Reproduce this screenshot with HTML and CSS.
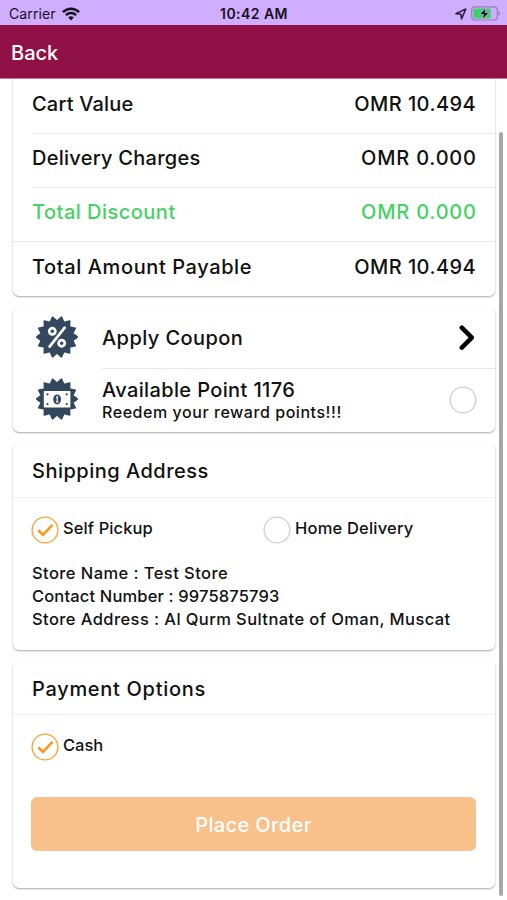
FILE: index.html
```html
<!DOCTYPE html>
<html lang="en">
<head>
<meta charset="utf-8">
<title>Checkout</title>
<link rel="stylesheet" href="styles.css">
</head>
<body>
<svg width="0" height="0" class="defs">
  <defs>
    <path id="burst" d="M0-16 4.5-19.8 6.9-14.4 12.7-15.9 12.5-10 18.3-8.8 15.6-3.6 20.3 0 15.6 3.6 18.3 8.8 12.5 10 12.7 15.9 6.9 14.4 4.5 19.8 0 16-4.5 19.8-6.9 14.4-12.7 15.9-12.5 10-18.3 8.8-15.6 3.6-20.3 0-15.6-3.6-18.3-8.8-12.5-10-12.7-15.9-6.9-14.4-4.5-19.8Z" fill="#33475f" stroke="#33475f" stroke-width="1.6" stroke-linejoin="round"/>
    <g id="check"><circle cx="14" cy="14" r="12.9" fill="#fff" stroke="#f9a53a" stroke-width="1.4"/><path d="M7.2 14.2 11.9 18.8 21.5 8.9" fill="none" stroke="#f99a1c" stroke-width="2.6"/></g>
  </defs>
</svg>
<header class="status">
  <div class="carrier"><span class="t-carrier">Carrier</span>
    <svg width="18" height="14" viewBox="0 0 18 14" fill="none" stroke="#17121c" stroke-width="2.5"><path d="M.9 5.2C5.5.6 12.5.6 17.1 5.2M3.9 8.2c2.9-2.8 7.3-2.8 10.2 0"/><path d="M6.2 10.4c1.7-1.4 3.9-1.4 5.6 0L9 13.4Z" fill="#17121c" stroke="none"/></svg>
  </div>
  <span class="time">10:42 AM</span>
  <div class="battery">
    <svg width="12" height="12" viewBox="0 0 12 12"><path d="M1 5.6 10.8 1 6.6 10.8 5.9 6.2Z" fill="none" stroke="#2b2238" stroke-width="1.6" stroke-linejoin="round"/></svg>
    <svg width="30" height="15" viewBox="0 0 30 15"><rect x=".7" y=".8" width="25.6" height="13.2" rx="3.4" fill="none" stroke="#9482b3" stroke-width="1.2"/><rect x="2.4" y="2.4" width="17.4" height="10" rx="1.8" fill="#3fd06a"/><path d="M27.4 5.2c2 .6 2 3.8 0 4.4Z" fill="#9482b3"/><path d="M14.8 1.8 8.8 8.3h3.7l-1.1 5L18 6.6h-4Z" fill="#111" stroke="#cfadff" stroke-width=".7"/></svg>
  </div>
</header>
<nav class="nav"><span class="t-back">Back</span></nav>
<main class="content">
  <section class="card summary">
    <div class="line"><span class="t-cart">Cart Value</span><span class="t-amt">OMR 10.494</span></div>
    <div class="line"><span class="t-delivery">Delivery Charges</span><span class="t-zero">OMR 0.000</span></div>
    <div class="line discount"><span class="t-discount">Total Discount</span><span class="t-zero">OMR 0.000</span></div>
    <div class="line total"><span class="t-total">Total Amount Payable</span><span class="t-amt">OMR 10.494</span></div>
  </section>
  <section class="card offers">
    <div class="offer">
      <svg class="badge" width="44" height="44" viewBox="-22 -22 44 44"><use href="#burst"/><g fill="none" stroke="#fff" stroke-width="2.7" stroke-linecap="round"><circle cx="-4.7" cy="-5.7" r="3.1"/><circle cx="4.7" cy="6.2" r="3.1"/><path d="M7.7-9.3-7.4 9.7"/></g></svg>
      <div class="offer-body coupon"><span class="t-coupon">Apply Coupon</span>
        <svg width="18" height="26" viewBox="0 0 18 26"><path d="M3.8 2.7 13.8 12.7 3.8 22.7" fill="none" stroke="#000" stroke-width="4.5" stroke-linecap="round" stroke-linejoin="round"/></svg>
      </div>
    </div>
    <div class="offer">
      <svg class="badge" width="44" height="44" viewBox="-22 -22 44 44"><use href="#burst"/><rect x="-13.2" y="-8" width="26.6" height="16.6" rx=".8" fill="#fff"/><g fill="#33475f"><ellipse cx=".1" cy=".4" rx="3.9" ry="5"/><circle cx="-9.5" cy="-4.7" r="1.1"/><circle cx="9.7" cy="-4.7" r="1.1"/><circle cx="-9.5" cy="5.1" r="1.1"/><circle cx="9.7" cy="5.1" r="1.1"/></g><path d="M-.9-1.4.2-2.3V2.8M-1.1 2.9H1.4" fill="none" stroke="#fff" stroke-width="1.1"/></svg>
      <div class="offer-body points">
        <div class="stack"><span class="t-points">Available Point 1176</span><span class="small t-redeem">Reedem your reward points!!!</span></div>
        <svg width="28" height="28" viewBox="0 0 28 28"><circle cx="14" cy="14" r="12.9" fill="#fff" stroke="#d2d2d2" stroke-width="1.4"/></svg>
      </div>
    </div>
  </section>
  <section class="card shipping">
    <h2><span class="t-shipping">Shipping Address</span></h2>
    <div class="options">
      <div class="option"><svg width="28" height="28"><use href="#check"/></svg><span class="t-self">Self Pickup</span></div>
      <div class="option"><svg width="28" height="28"><circle cx="14" cy="14" r="12.9" fill="#fff" stroke="#d2d2d2" stroke-width="1.4"/></svg><span class="t-home">Home Delivery</span></div>
    </div>
    <address>
      <div><span class="t-store">Store Name : Test Store</span></div>
      <div><span class="t-contact">Contact Number : 9975875793</span></div>
      <div><span class="t-address">Store Address : Al Qurm Sultnate of Oman, Muscat</span></div>
    </address>
  </section>
  <section class="card payment">
    <h2><span class="t-payment">Payment Options</span></h2>
    <div class="options">
      <div class="option"><svg width="28" height="28"><use href="#check"/></svg><span class="t-cash">Cash</span></div>
    </div>
    <button class="order"><span class="t-order">Place Order</span></button>
  </section>
  <div class="scrollbar"></div>
</main>
</body>
</html>
```
FILE: styles.css
```css
* { box-sizing: border-box; }
body {
  margin: 0;
  width: 507px;
  height: 900px;
  overflow: hidden;
  background: #fff;
  color: #111;
  font: 500 20px/24px Inter, "Noto Sans", sans-serif;
}
svg { display: block; flex: none; }
.defs { position: absolute; }
span { white-space: nowrap; }

.status {
  display: grid;
  grid-template-columns: 1fr auto 1fr;
  align-items: center;
  height: 25px;
  padding: 2px 6px 0 9px;
  background: #cfadff;
  color: #17121c;
  font-size: 14px;
  line-height: 20px;
}
.carrier { display: flex; align-items: center; gap: 6px; font-weight: 400; }
.time { font-weight: 600; letter-spacing: .45px; margin-left: -2px; }
.battery { display: flex; align-items: center; justify-content: flex-end; gap: 4px; }
.nav {
  display: flex;
  align-items: center;
  height: 54px;
  padding: 2px 11px 0;
  background: #8f1145;
  border-bottom: 1px solid #c67997;
  color: #fff;
}
.content { position: relative; height: 821px; padding: 0 12px 0 13px; }
.card {
  background: #fff;
  border-radius: 6px;
  box-shadow: 0 1px 2px rgba(0, 0, 0, .34);
}

.summary { height: 217px; padding-top: 1px; border-radius: 0 0 6px 6px; clip-path: inset(0 -5px -5px -5px); }
.line {
  display: flex;
  align-items: center;
  justify-content: space-between;
  height: 54px;
  margin-left: 19px;
  padding: 0 19px 5px 0;
  border-bottom: 1px solid #e8e8e8;
}
.discount { margin-left: 0; padding-left: 19px; color: #45d264; }
.total { height: 55px; border: 0; }

.offers { height: 125px; margin-top: 11px; }
.offer { display: flex; height: 62px; padding-left: 22px; }
.badge { margin-top: 8px; }
.offer-body { display: flex; justify-content: space-between; flex: 1; margin-left: 23px; }
.coupon { align-items: center; padding: 0 19px 0 0; border-bottom: 1px solid #e8e8e8; }
.points { align-items: center; padding: 0 18px 0 0; }
.stack { display: flex; flex-direction: column; }
.small { font-size: 16px; line-height: 20px; }

.shipping { height: 207px; margin-top: 11px; }
h2 {
  display: flex;
  align-items: center;
  height: 55px;
  margin: 0;
  padding: 2px 19px 0;
  border-bottom: 1px solid #f1f1f1;
  font: inherit;
}
.options {
  display: grid;
  grid-template-columns: 232px 1fr;
  margin-top: 18px;
  padding-left: 18px;
  font-size: 16.5px;
}
.option { display: flex; align-items: center; gap: 4px; }
.option span { margin-top: -4px; }
address { margin: 18px 19px 0; font: 500 16.5px/23px Inter, sans-serif; }

.payment { height: 228px; margin-top: 10px; }
.payment h2 { padding-top: 3px; }
.order {
  display: flex;
  align-items: center;
  justify-content: center;
  width: 445px;
  height: 54px;
  margin: 36px 0 0 18px;
  padding: 1px 0 0;
  border: 0;
  border-radius: 6px;
  background: #f8c08a;
  color: #fff;
  font: inherit;
}
.scrollbar {
  position: absolute;
  top: 53px;
  right: 4px;
  width: 4px;
  height: 764px;
  border-radius: 2px;
  background: #a8a8a8;
}

/* Tracking per label */
.t-carrier { letter-spacing: .12px; }
.t-cart { letter-spacing: .2px; }
.t-amt { letter-spacing: .42px; }
.t-zero { letter-spacing: .8px; margin-right: -.8px; }
.t-delivery { letter-spacing: .26px; }
.t-discount { letter-spacing: .48px; }
.t-total { letter-spacing: .6px; }
.t-coupon { letter-spacing: .43px; }
.t-points { letter-spacing: .37px; }
.t-redeem { letter-spacing: .55px; }
.t-shipping { letter-spacing: .49px; }
.t-self { letter-spacing: .1px; }
.t-home { letter-spacing: .2px; }
.t-store { letter-spacing: .43px; }
.t-contact { letter-spacing: .15px; }
.t-address { letter-spacing: .42px; }
.t-payment { letter-spacing: .7px; }
.t-order { letter-spacing: .38px; }
```
